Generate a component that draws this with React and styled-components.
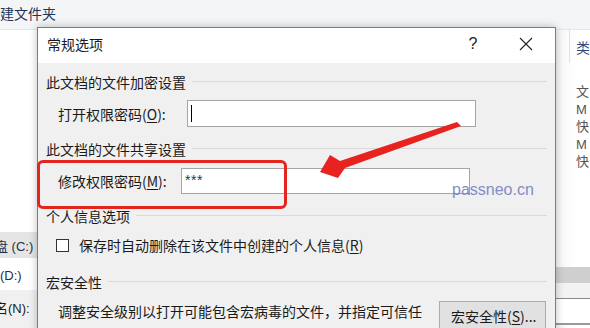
import React from 'react';
import styled, { createGlobalStyle } from 'styled-components';

const Global = createGlobalStyle`
  html, body { margin: 0; padding: 0; }
  body {
    width: 590px; height: 328px; overflow: hidden; background: #fff;
    font-family: "Noto Sans CJK SC", "Noto Sans", sans-serif;
  }
`;

const Page = styled.div`
  position: relative;
  width: 590px;
  height: 328px;
  overflow: hidden;
  background: #fff;
`;

const Explorer = styled.div`
  width: 590px;
  height: 328px;
  display: grid;
  grid-template-rows: 30px 1fr;
  grid-template-columns: 37px 1fr 34px;
`;

const TopBar = styled.div`
  grid-column: 1 / -1;
  background: #f4f5f7;
  border-bottom: 1px solid #e6e7e9;
  padding-top: 3px;
  font-size: 14px;
  line-height: 20px;
  color: #1f3455;
  white-space: nowrap;
`;

const LeftPane = styled.div`
  display: flex;
  flex-direction: column;
  padding-top: 202px;
  overflow: hidden;
`;

const NavItem = styled.div`
  height: 26px;
  margin-top: ${p => p.$mt || 0}px;
  display: flex;
  align-items: center;
  font-family: "Liberation Sans", "Noto Sans CJK SC", sans-serif;
  font-size: 13px;
  color: #1e2f4a;
  white-space: nowrap;
  background: ${p => (p.$selected ? '#e5e5e5' : 'transparent')};
`;

const Clipped = styled.span`
  margin-left: ${p => p.$shift || 0}px;
`;

const FieldStrip = styled.div`
  margin-top: 2px;
  flex: 1;
  background: #f0f0f0;
  padding-top: 9px;
  font-family: "Liberation Sans", "Noto Sans CJK SC", sans-serif;
  font-size: 13px;
  line-height: 20px;
  color: #1a1a1a;
  white-space: nowrap;
`;

const Middle = styled.div``;

const RightPane = styled.div`
  display: flex;
  flex-direction: column;
  overflow: hidden;
  background: linear-gradient(90deg, #f6f6f6, #ffffff 60%);
`;

const ColHeader = styled.div`
  height: 33px;
  display: flex;
  align-items: center;
`;

const ColDivider = styled.div`
  width: 1px;
  align-self: stretch;
  background: #e2e2e2;
  margin-left: 13px;
`;

const ColTitle = styled.div`
  margin-left: 6px;
  font-size: 14px;
  line-height: 18px;
  color: #2b4a80;
`;

const FileList = styled.div`
  margin-top: 20px;
  display: flex;
  flex-direction: column;
`;

const FileCell = styled.div`
  height: 17.5px;
  line-height: 17px;
  padding-left: 20px;
  font-family: "Liberation Sans", "Noto Sans CJK SC", sans-serif;
  font-size: 13px;
  color: #555;
`;

const GrayBand = styled.div`
  margin-top: 96px;
  height: 16px;
  background: #cfcfcf;
`;

const BandGap = styled.div`
  height: 15px;
  background: #f2f2f2;
  border-bottom: 1px solid #8a8a8a;
`;

const WhiteRow = styled.div`
  height: 24px;
  background: #fff;
  border-bottom: 2px solid #9a9a9a;
`;

const Dialog = styled.div`
  position: absolute;
  left: 37px;
  top: 27px;
  width: 519px;
  height: 320px;
  box-sizing: border-box;
  border: 1px solid #7d7d7d;
  box-shadow: 0 0 8px rgba(0, 0, 0, 0.25);
  background: #f0f0f0;
  display: flex;
  flex-direction: column;
  color: #1a1a1a;
  font-size: 14px;
`;

const TitleBar = styled.div`
  height: 35px;
  box-sizing: border-box;
  padding-bottom: 3px;
  background: #fff;
  display: flex;
  align-items: center;
  padding-left: 9px;
`;

const Title = styled.div`
  flex: 1;
  font-size: 14px;
`;

const HelpButton = styled.div`
  width: 20px;
  text-align: center;
  font-family: "Liberation Sans", sans-serif;
  font-size: 16px;
  margin-right: 36px;
  color: #222;
`;

const CloseButton = styled.div`
  width: 14px;
  height: 14px;
  margin-right: 22px;
  display: flex;
`;

const Body = styled.div`
  display: flex;
  flex-direction: column;
  padding: 8px 8px 0 8px;
`;

const SectionHeader = styled.div`
  height: 22px;
  margin-top: ${p => p.$mt || 0}px;
  display: flex;
  align-items: center;
  gap: 6px;
  white-space: nowrap;
`;

const HeaderLine = styled.div`
  flex: 1;
  height: 1px;
  background: #dadada;
  margin-top: -2px;
`;

const FieldRow = styled.div`
  height: ${p => p.$h}px;
  margin-top: ${p => p.$mt}px;
  padding-left: 12px;
  display: flex;
  align-items: center;
`;

const Label = styled.div`
  width: ${p => p.$w}px;
  white-space: nowrap;
`;

const U = styled.span`
  text-decoration: underline;
  text-underline-offset: 2px;
`;

const TextBox = styled.div`
  width: 289px;
  height: 100%;
  box-sizing: border-box;
  background: #fff;
  border: 1px solid #a5a5a5;
  display: flex;
  align-items: center;
  padding-left: 3px;
  font-family: "Liberation Sans", sans-serif;
  font-size: 14px;
`;

const Caret = styled.div`
  width: 1px;
  height: 17px;
  background: #000;
`;

const Stars = styled.span`
  margin-top: -2px;
  letter-spacing: 0.5px;
  color: #333;
`;

const CheckRow = styled.div`
  height: 22px;
  margin-top: 7px;
  padding-left: 10px;
  display: flex;
  align-items: center;
  gap: 10px;
  white-space: nowrap;
`;

const CheckBox = styled.div`
  width: 13px;
  height: 13px;
  box-sizing: border-box;
  border: 1px solid #333;
  background: #fff;
`;

const MacroRow = styled.div`
  margin-top: 7px;
  padding-left: 12px;
  display: flex;
  align-items: flex-start;
`;

const Description = styled.div`
  width: 372px;
  line-height: 23px;
`;

const MacroButton = styled.button`
  margin-top: 1px;
  margin-left: auto;
  margin-right: 1px;
  width: 107px;
  height: 30px;
  box-sizing: border-box;
  background: #e1e1e1;
  border: 1px solid #adadad;
  font-family: inherit;
  font-size: 14px;
  color: #1a1a1a;
  text-align: left;
  padding: 0 0 0 11px;
  white-space: nowrap;
`;

const Overlay = styled.div`
  position: absolute;
  inset: 0;
  pointer-events: none;
`;

const Highlight = styled.div`
  position: absolute;
  left: 37px;
  top: 160px;
  width: 250px;
  height: 49px;
  box-sizing: border-box;
  border: 3px solid #e3241f;
  border-radius: 6px;
`;

const ArrowLayer = styled.svg`
  position: absolute;
  left: 0;
  top: 0;
`;

const Watermark = styled.div`
  position: absolute;
  left: 452px;
  top: 180px;
  font-family: "Liberation Sans", sans-serif;
  font-size: 16px;
  line-height: 20px;
  color: #7582c0;
  opacity: 0.9;
`;

export default function App() {
  return (
    <>
      <Global />
      <Page>
        <Explorer>
          <TopBar>建文件夹</TopBar>
          <LeftPane>
            <NavItem $selected>
              <Clipped $shift={-5}>盘 (C:)</Clipped>
            </NavItem>
            <NavItem $mt={4}>(D:)</NavItem>
            <FieldStrip>
              <Clipped $shift={-5}>名(N):</Clipped>
            </FieldStrip>
          </LeftPane>
          <Middle />
          <RightPane>
            <ColHeader>
              <ColDivider />
              <ColTitle>类</ColTitle>
            </ColHeader>
            <FileList>
              <FileCell>文</FileCell>
              <FileCell>M</FileCell>
              <FileCell>快</FileCell>
              <FileCell>M</FileCell>
              <FileCell>快</FileCell>
            </FileList>
            <GrayBand />
            <BandGap />
            <WhiteRow />
          </RightPane>
        </Explorer>

        <Dialog>
          <TitleBar>
            <Title>常规选项</Title>
            <HelpButton>?</HelpButton>
            <CloseButton>
              <svg width="14" height="14" viewBox="0 0 14 14">
                <path d="M1 1 L13 13 M13 1 L1 13" stroke="#222" strokeWidth="1.1" fill="none" />
              </svg>
            </CloseButton>
          </TitleBar>
          <Body>
            <SectionHeader>
              此文档的文件加密设置
              <HeaderLine />
            </SectionHeader>
            <FieldRow $h={27} $mt={7}>
              <Label $w={129}>打开权限密码(<U>O</U>):</Label>
              <TextBox>
                <Caret />
              </TextBox>
            </FieldRow>
            <SectionHeader $mt={11}>
              此文档的文件共享设置
              <HeaderLine />
            </SectionHeader>
            <FieldRow $h={26} $mt={8}>
              <Label $w={123}>修改权限密码(<U>M</U>):</Label>
              <TextBox>
                <Stars>***</Stars>
              </TextBox>
            </FieldRow>
            <SectionHeader $mt={11}>
              个人信息选项
              <HeaderLine />
            </SectionHeader>
            <CheckRow>
              <CheckBox />
              <span>
                保存时自动删除在该文件中创建的个人信息(<U>R</U>)
              </span>
            </CheckRow>
            <SectionHeader $mt={15}>
              宏安全性
              <HeaderLine />
            </SectionHeader>
            <MacroRow>
              <Description>调整安全级别以打开可能包含宏病毒的文件，并指定可信任的宏创建者姓名。</Description>
              <MacroButton>
                宏安全性(<U>S</U>)...
              </MacroButton>
            </MacroRow>
          </Body>
        </Dialog>

        <Overlay>
          <Highlight />
          <ArrowLayer width="590" height="328" viewBox="0 0 590 328">
            <polygon
              points="320,172 330,155 340,161 457,122 461,126 345,168 338,178"
              fill="#e8231f"
            />
          </ArrowLayer>
          <Watermark>passneo.cn</Watermark>
        </Overlay>
      </Page>
    </>
  );
}
